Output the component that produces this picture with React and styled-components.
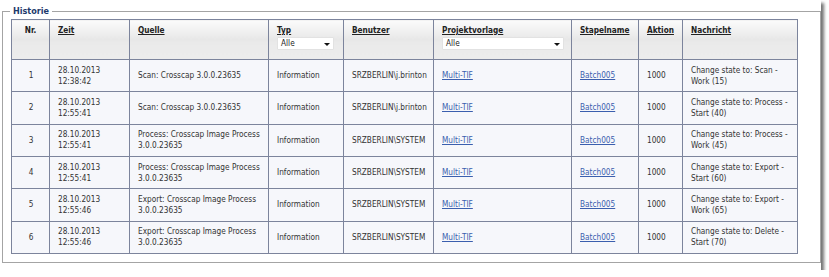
import React from "react";
import styled, { createGlobalStyle } from "styled-components";

const GlobalStyle = createGlobalStyle`
  html, body { margin: 0; padding: 0; background: #fff; }
  body { font-family: "DejaVu Sans Condensed", "DejaVu Sans", sans-serif; font-stretch: condensed; }
`;

const Shot = styled.div`
  width: 821px;
  height: 270px;
  box-sizing: border-box;
  background: #fff;
  padding: 6px 0 0 2px;
  box-shadow: 3px 3px 3px rgba(0, 0, 0, 0.55);
`;

const Fieldset = styled.fieldset`
  margin: 0;
  min-width: 0;
  width: 819px;
  height: 257px;
  box-sizing: border-box;
  border: 1px solid #a4a4a4;
  padding: 2px 8px 0 8px;
`;

const Legend = styled.legend`
  margin-left: -1px;
  padding: 0 3px;
  font-size: 9px;
  line-height: 11px;
  font-weight: bold;
  color: #1d3a6c;
`;

const Grid = styled.table`
  width: 786px;
  border-collapse: collapse;
  table-layout: fixed;
  font-size: 8.2px;
  line-height: 11px;
  color: #333;
`;

const HeadCell = styled.th`
  height: 40px;
  box-sizing: border-box;
  vertical-align: top;
  text-align: ${(p) => (p.$center ? "center" : "left")};
  padding: 5px 8px 0;
  border: 1px solid #7c849c;
  background: linear-gradient(#fbfbfb 0%, #e6e6e6 52%, #eaeaea 53%, #ececec 100%);
  font-weight: bold;
  color: #222;
`;

const SortLink = styled.span`
  text-decoration: underline;
  color: #222;
`;

const Filter = styled.div`
  margin-top: 1px;
  height: 13px;
  box-sizing: border-box;
  width: ${(p) => p.$w}px;
  display: flex;
  align-items: center;
  justify-content: space-between;
  padding: 0 3px 0 3px;
  background: #fff;
  border: 1px solid #e2e2e2;
  border-radius: 1px;
  font-weight: normal;
  color: #222;
`;

const Caret = styled.span`
  width: 0;
  height: 0;
  border-left: 3px solid transparent;
  border-right: 3px solid transparent;
  border-top: 3px solid #111;
  margin-top: 1px;
`;

const Row = styled.tr`
  height: 32.33px;
`;

const Cell = styled.td`
  box-sizing: border-box;
  padding: 0 ${(p) => (p.$tight ? 2 : 7)}px 0 8px;
  vertical-align: middle;
  text-align: ${(p) => (p.$center ? "center" : "left")};
  border: 1px solid #7c849c;
  background: #f6f7fb;
`;

const Link = styled.a`
  color: #3b5fae;
  text-decoration: underline;
`;

const columns = [
  { key: "nr", label: "Nr.", w: 38, center: true, sortable: false },
  { key: "zeit", label: "Zeit", w: 80 },
  { key: "quelle", label: "Quelle", w: 139 },
  { key: "typ", label: "Typ", w: 75, filter: 57 },
  { key: "benutzer", label: "Benutzer", w: 90 },
  { key: "projekt", label: "Projektvorlage", w: 138, filter: 122 },
  { key: "stapel", label: "Stapelname", w: 67 },
  { key: "aktion", label: "Aktion", w: 44 },
  { key: "nachricht", label: "Nachricht", w: 115 },
];

const rows = [
  { nr: 1, date: "28.10.2013", time: "12:38:42", quelle: "Scan: Crosscap 3.0.0.23635", user: "SRZBERLIN\\j.brinton", msg: "Change state to: Scan - Work (15)" },
  { nr: 2, date: "28.10.2013", time: "12:55:41", quelle: "Scan: Crosscap 3.0.0.23635", user: "SRZBERLIN\\j.brinton", msg: "Change state to: Process - Start (40)" },
  { nr: 3, date: "28.10.2013", time: "12:55:41", quelle: "Process: Crosscap Image Process 3.0.0.23635", user: "SRZBERLIN\\SYSTEM", msg: "Change state to: Process - Work (45)" },
  { nr: 4, date: "28.10.2013", time: "12:55:41", quelle: "Process: Crosscap Image Process 3.0.0.23635", user: "SRZBERLIN\\SYSTEM", msg: "Change state to: Export - Start (60)" },
  { nr: 5, date: "28.10.2013", time: "12:55:46", quelle: "Export: Crosscap Image Process 3.0.0.23635", user: "SRZBERLIN\\SYSTEM", msg: "Change state to: Export - Work (65)" },
  { nr: 6, date: "28.10.2013", time: "12:55:46", quelle: "Export: Crosscap Image Process 3.0.0.23635", user: "SRZBERLIN\\SYSTEM", msg: "Change state to: Delete - Start (70)" },
];

export default function App() {
  return (
    <>
      <GlobalStyle />
      <Shot>
        <Fieldset>
          <Legend>Historie</Legend>
          <Grid>
            <colgroup>
              {columns.map((c) => (
                <col key={c.key} style={{ width: c.w }} />
              ))}
            </colgroup>
            <thead>
              <tr>
                {columns.map((c) => (
                  <HeadCell key={c.key} $center={c.center}>
                    {c.sortable === false ? c.label : <SortLink>{c.label}</SortLink>}
                    {c.filter && (
                      <Filter $w={c.filter}>
                        <span>Alle</span>
                        <Caret />
                      </Filter>
                    )}
                  </HeadCell>
                ))}
              </tr>
            </thead>
            <tbody>
              {rows.map((r) => (
                <Row key={r.nr}>
                  <Cell $center>{r.nr}</Cell>
                  <Cell>
                    {r.date}
                    <br />
                    {r.time}
                  </Cell>
                  <Cell $tight>{r.quelle}</Cell>
                  <Cell>Information</Cell>
                  <Cell>{r.user}</Cell>
                  <Cell>
                    <Link href="#">Multi-TIF</Link>
                  </Cell>
                  <Cell>
                    <Link href="#">Batch005</Link>
                  </Cell>
                  <Cell>1000</Cell>
                  <Cell>{r.msg}</Cell>
                </Row>
              ))}
            </tbody>
          </Grid>
        </Fieldset>
      </Shot>
    </>
  );
}
